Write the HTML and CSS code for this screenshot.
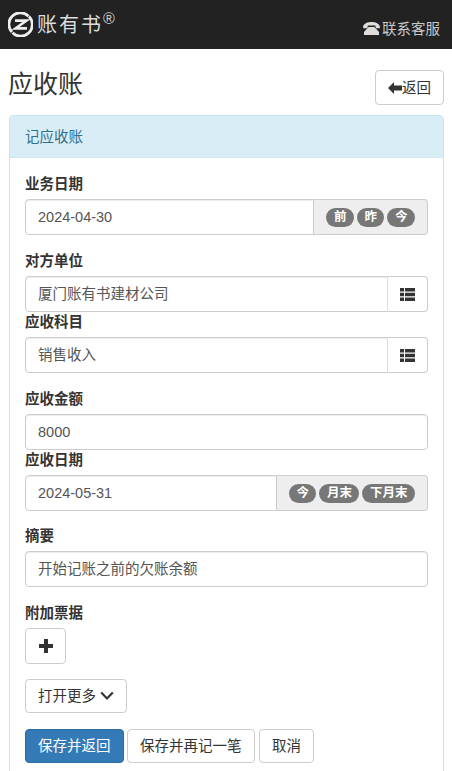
FILE: index.html
```html
<!DOCTYPE html>
<html lang="zh-CN">
<head>
<meta charset="utf-8">
<title>应收账</title>
<link rel="stylesheet" href="styles.css">
</head>
<body>
<header class="navbar">
  <div class="brand">
    <svg class="brand-icon" width="25" height="25" viewBox="0 0 25 25">
      <path d="M20.500 4.300A11 11 0 0 0 4 20M4.500 20.700A11 11 0 0 0 21 4.500" fill="none" stroke="#eee" stroke-width="2.800"/>
      <path d="M7 8.600h11.500L7.500 16.400H19" fill="none" stroke="#eee" stroke-width="2.600"/>
    </svg>
    <span class="brand-name">账有书</span><span class="brand-mark">®</span>
  </div>
  <div class="service">
    <svg width="17" height="13" viewBox="0 0 17 13">
      <path d="M0 4.600C1 1.400 4.700 0 8.500 0s7.500 1.400 8.500 4.600l-.3 1.600h-3.600L12.200 3.600H4.800L4.400 6.200H.3z" fill="#ddd"/>
      <path d="M5.500 5h6l4.500 5v3H1v-3z" fill="#ddd"/>
    </svg>
    <span>联系客服</span>
  </div>
</header>
<main class="page">
  <div class="title-row">
    <h1 class="title">应收账</h1>
    <button class="btn back-btn">
      <svg width="14" height="12" viewBox="0 0 14 12"><path d="M0 6l6-6v3.600h8v4.800H6V12z" fill="#333"/></svg><span>返回</span>
    </button>
  </div>
  <section class="panel">
    <div class="panel-heading">记应收账</div>
    <div class="panel-body">
      <div class="field gap-16">
        <label class="label">业务日期</label>
        <div class="input-group">
          <div class="control">2024-04-30</div>
          <div class="addon"><span class="badge">前</span><span class="badge">昨</span><span class="badge">今</span></div>
        </div>
      </div>
      <div class="field">
        <label class="label">对方单位</label>
        <div class="input-group">
          <div class="control">厦门账有书建材公司</div>
          <div class="list-addon">
            <svg width="15" height="13" viewBox="0 0 15 13"><path d="M0 0h4v3.400H0zM5 0h10v3.400H5zM0 4.800h4v3.400H0zM5 4.800h10v3.400H5zM0 9.600h4V13H0zM5 9.600h10V13H5z" fill="#333"/></svg>
          </div>
        </div>
      </div>
      <div class="field gap-16">
        <label class="label">应收科目</label>
        <div class="input-group">
          <div class="control">销售收入</div>
          <div class="list-addon">
            <svg width="15" height="13" viewBox="0 0 15 13"><path d="M0 0h4v3.400H0zM5 0h10v3.400H5zM0 4.800h4v3.400H0zM5 4.800h10v3.400H5zM0 9.600h4V13H0zM5 9.600h10V13H5z" fill="#333"/></svg>
          </div>
        </div>
      </div>
      <div class="field">
        <label class="label">应收金额</label>
        <div class="control solo">8000</div>
      </div>
      <div class="field gap-15">
        <label class="label">应收日期</label>
        <div class="input-group">
          <div class="control">2024-05-31</div>
          <div class="addon"><span class="badge">今</span><span class="badge">月末</span><span class="badge">下月末</span></div>
        </div>
      </div>
      <div class="field gap-16">
        <label class="label">摘要</label>
        <div class="control solo">开始记账之前的欠账余额</div>
      </div>
      <div class="field gap-15">
        <label class="label">附加票据</label>
        <button class="btn plus-btn">
          <svg width="14" height="14" viewBox="0 0 14 14"><path d="M5 0h4v5h5v4H9v5H5V9H0V5h5z" fill="#333"/></svg>
        </button>
      </div>
      <button class="btn more-btn">
        <span>打开更多</span>
        <svg width="14" height="10" viewBox="0 0 14 10"><path d="M1.200 1.500L7 7.500l5.800-6" fill="none" stroke="#333" stroke-width="2.200"/></svg>
      </button>
      <div class="actions">
        <button class="btn primary">保存并返回</button>
        <button class="btn">保存并再记一笔</button>
        <button class="btn cancel">取消</button>
      </div>
    </div>
  </section>
</main>
</body>
</html>
```
FILE: styles.css
```css
* { box-sizing: border-box; }
html, body { margin: 0; height: 771px; overflow: hidden; background: #fff; }
body {
  font-family: "Liberation Sans", "Noto Sans CJK SC", sans-serif;
  font-size: 14.5px;
  line-height: 20px;
  color: #333;
}
.navbar {
  height: 49px;
  background: #222;
  display: flex;
  justify-content: space-between;
  padding: 0 12px 0 8px;
}
.brand { display: flex; align-items: flex-start; padding-top: 12px; }
.brand-icon { flex: none; }
.brand-name {
  margin-left: 4px;
  font-size: 20px;
  line-height: 26px;
  letter-spacing: 2px;
  color: #dcdcdc;
}
.brand-mark { font-size: 16px; line-height: 14px; color: #ccc; }
.service {
  display: flex;
  align-items: center;
  gap: 2px;
  padding-top: 8px;
  color: #c8c8c8;
}
.page { padding: 0 8px 0 9px; }
.title-row {
  height: 66px;
  display: flex;
  justify-content: space-between;
  align-items: flex-start;
}
.title {
  margin: 20px 0 0 -1px;
  font-size: 25px;
  line-height: 30px;
  font-weight: 400;
}
.btn {
  height: 34px;
  padding: 0 12px;
  font: inherit;
  color: #333;
  background: #fff;
  border: 1px solid #ccc;
  border-radius: 4px;
  display: inline-flex;
  align-items: center;
  justify-content: center;
}
.back-btn { height: 35px; margin-top: 21px; width: 69px; padding: 0; }
.panel {
  border: 1px solid #bce8f1;
  border-radius: 4px;
  background: #fff;
}
.panel-heading {
  height: 42px;
  padding: 11px 15px;
  background: #d9edf7;
  color: #31708f;
  border-bottom: 1px solid #d0e6f0;
}
.panel-body { padding: 16px 15px 15px; }
.field.gap-16 { margin-bottom: 16px; }
.field.gap-15 { margin-bottom: 15px; }
.label {
  display: block;
  height: 20px;
  margin-bottom: 5px;
  font-weight: 700;
}
.input-group { display: flex; height: 36px; }
.control {
  height: 36px;
  padding: 7px 12px;
  border: 1px solid #ccc;
  border-radius: 4px;
  color: #555;
  box-shadow: inset 0 1px 1px rgba(0,0,0,.075);
}
.solo { width: 100%; }
.input-group .control {
  flex: 1;
  border-radius: 4px 0 0 4px;
}
.addon {
  flex: none;
  display: flex;
  align-items: center;
  gap: 3px;
  padding: 0 12px;
  background: #eee;
  border: 1px solid #ccc;
  border-left: 0;
  border-radius: 0 4px 4px 0;
}
.badge {
  height: 19px;
  padding: 0 7.500px;
  border-radius: 10px;
  background: #777;
  color: #fff;
  font-size: 12.500px;
  line-height: 19px;
  font-weight: 700;
}
.list-addon {
  flex: none;
  width: 41px;
  display: flex;
  align-items: center;
  justify-content: center;
  border: 1px solid #ccc;
  border-left: 1px solid #ddd;
  margin-left: -1px;
  background: #fff;
  border-radius: 0 4px 4px 0;
}
.plus-btn { display: flex; width: 41px; height: 36px; padding: 0; }
.more-btn { gap: 4px; height: 34px; display: flex; }
.actions { display: flex; gap: 3.500px; margin-top: 16px; }
.cancel { margin-left: 1px; }
.primary { background: #337ab7; border-color: #2e6da4; color: #fff; }
```
